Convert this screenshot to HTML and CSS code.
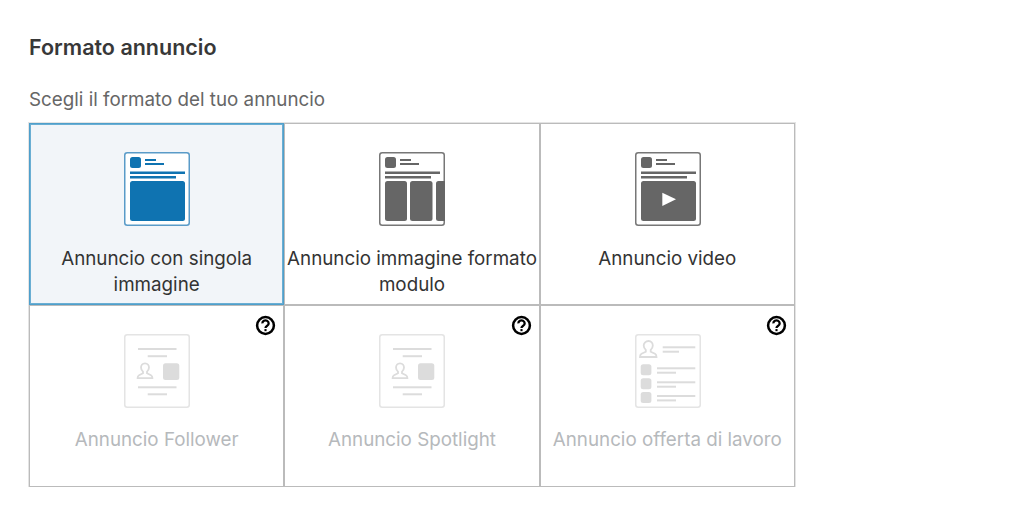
FILE: index.html
```html
<!DOCTYPE html>
<html lang="en">
<head>
    <meta charset="UTF-8">
    <meta name="viewport" content="width=device-width, initial-scale=1.0">
    <title>Formato annuncio</title>
    <link rel="stylesheet" href="styles.css">
</head>
<body>
    <div class="container">
        <h1 class="title">Formato annuncio</h1>
        <p class="subtitle">Scegli il formato del tuo annuncio</p>

        <div class="format-grid">
            <div class="format-card selected">
                <svg class="format-icon" viewBox="0 0 66 74">
                    <rect class="frame" x="0.75" y="0.75" width="64.5" height="72.5" rx="2.5"/>
                    <rect class="solid" x="6" y="5" width="11" height="11" rx="2.5"/>
                    <rect class="solid" x="21" y="7" width="11" height="2"/>
                    <rect class="solid" x="21" y="11" width="19" height="2"/>
                    <rect class="solid" x="6" y="19.5" width="55" height="2.5"/>
                    <rect class="solid" x="6" y="24" width="46" height="2.5"/>
                    <rect class="solid" x="6" y="29" width="55" height="40" rx="2.5"/>
                </svg>
                <div class="format-label">Annuncio con singola immagine</div>
            </div>

            <div class="format-card">
                <svg class="format-icon" viewBox="0 0 66 74">
                    <rect class="frame" x="0.75" y="0.75" width="64.5" height="72.5" rx="2.5"/>
                    <rect class="solid" x="6" y="5" width="11" height="11" rx="2.5"/>
                    <rect class="solid" x="21" y="7" width="11" height="2"/>
                    <rect class="solid" x="21" y="11" width="19" height="2"/>
                    <rect class="solid" x="6" y="19.5" width="55" height="2.5"/>
                    <rect class="solid" x="6" y="24" width="46" height="2.5"/>
                    <rect class="solid" x="6" y="29" width="22" height="40" rx="2.5"/>
                    <rect class="solid" x="31" y="29" width="22.5" height="40" rx="2.5"/>
                    <path class="solid" d="M66 29H59.5a2.5 2.5 0 0 0-2.5 2.5v35a2.5 2.5 0 0 0 2.5 2.5H66z"/>
                </svg>
                <div class="format-label">Annuncio immagine formato modulo</div>
            </div>

            <div class="format-card">
                <svg class="format-icon" viewBox="0 0 66 74">
                    <rect class="frame" x="0.75" y="0.75" width="64.5" height="72.5" rx="2.5"/>
                    <rect class="solid" x="6" y="5" width="11" height="11" rx="2.5"/>
                    <rect class="solid" x="21" y="7" width="11" height="2"/>
                    <rect class="solid" x="21" y="11" width="19" height="2"/>
                    <rect class="solid" x="6" y="19.5" width="55" height="2.5"/>
                    <rect class="solid" x="6" y="24" width="46" height="2.5"/>
                    <rect class="solid" x="6" y="29" width="55" height="40" rx="2.5"/>
                    <path class="play" d="M27.3 40.700L41 47.300L27.300 54z"/>
                </svg>
                <div class="format-label">Annuncio video</div>
            </div>

            <div class="format-card disabled">
                <svg class="help-icon" viewBox="0 0 20 20">
                    <circle cx="10" cy="10" r="8" fill="none" stroke="#000" stroke-width="2.4"/>
                    <path d="M7 8a3 2.8 0 1 1 4.6 2.3c-1 .7-1.6 1-1.6 2.1" fill="none" stroke="#000" stroke-width="2.2"/>
                    <rect x="9" y="13.4" width="2" height="2"/>
                </svg>
                <svg class="format-icon" viewBox="0 0 66 74">
                    <rect class="frame" x="0.75" y="0.75" width="64.5" height="72.5" rx="2.5"/>
                    <rect class="solid" x="14" y="14" width="38.5" height="2"/>
                    <rect class="solid" x="23.7" y="21.2" width="19.3" height="2"/>
                    <path class="person" d="M21 29.300c2.500 0 4 2 4 4.300 0 1.800-.8 3-2 4v1.700l4 2c1 .5 1.400 1.200 1.400 2.800H13.600c0-1.600.4-2.300 1.400-2.800l4-2v-1.700c-1.200-1-2-2.200-2-4 0-2.300 1.500-4.300 4-4.300z"/>
                    <rect class="solid" x="39" y="29.300" width="16.300" height="16.700" rx="2.500"/>
                    <rect class="solid" x="14" y="52.300" width="38.500" height="2"/>
                    <rect class="solid" x="23.700" y="59.300" width="19.300" height="2"/>
                </svg>
                <div class="format-label">Annuncio Follower</div>
            </div>

            <div class="format-card disabled">
                <svg class="help-icon" viewBox="0 0 20 20">
                    <circle cx="10" cy="10" r="8" fill="none" stroke="#000" stroke-width="2.4"/>
                    <path d="M7 8a3 2.8 0 1 1 4.6 2.3c-1 .7-1.6 1-1.6 2.1" fill="none" stroke="#000" stroke-width="2.2"/>
                    <rect x="9" y="13.4" width="2" height="2"/>
                </svg>
                <svg class="format-icon" viewBox="0 0 66 74">
                    <rect class="frame" x="0.75" y="0.75" width="64.5" height="72.5" rx="2.5"/>
                    <rect class="solid" x="14" y="14" width="38.5" height="2"/>
                    <rect class="solid" x="23.7" y="21.2" width="19.3" height="2"/>
                    <path class="person" d="M21 29.300c2.500 0 4 2 4 4.300 0 1.800-.8 3-2 4v1.700l4 2c1 .5 1.400 1.200 1.400 2.800H13.600c0-1.600.4-2.300 1.400-2.800l4-2v-1.700c-1.200-1-2-2.200-2-4 0-2.300 1.500-4.300 4-4.300z"/>
                    <rect class="solid" x="39" y="29.300" width="16.300" height="16.700" rx="2.500"/>
                    <rect class="solid" x="14" y="52.300" width="38.500" height="2"/>
                    <rect class="solid" x="23.700" y="59.300" width="19.300" height="2"/>
                </svg>
                <div class="format-label">Annuncio Spotlight</div>
            </div>

            <div class="format-card disabled">
                <svg class="help-icon" viewBox="0 0 20 20">
                    <circle cx="10" cy="10" r="8" fill="none" stroke="#000" stroke-width="2.4"/>
                    <path d="M7 8a3 2.8 0 1 1 4.6 2.3c-1 .7-1.6 1-1.6 2.1" fill="none" stroke="#000" stroke-width="2.2"/>
                    <rect x="9" y="13.4" width="2" height="2"/>
                </svg>
                <svg class="format-icon" viewBox="0 0 66 74">
                    <rect class="frame" x="0.75" y="0.75" width="64.5" height="72.5" rx="2.5"/>
                    <path class="person" d="M13.500 7c2.700 0 4.300 2.100 4.300 4.600 0 1.900-.8 3.200-2.100 4.300v1.800l4.300 2.100c1.100.6 1.500 1.300 1.500 3.200H5c0-1.900.4-2.600 1.500-3.200l4.300-2.100v-1.800c-1.300-1.100-2.100-2.400-2.100-4.300C8.700 9.100 10.800 7 13.500 7z"/>
                    <rect class="solid" x="27.700" y="12.300" width="32.600" height="2"/>
                    <rect class="solid" x="27.700" y="16.700" width="16.300" height="2"/>
                    <rect class="solid" x="5.700" y="30.300" width="10.700" height="11" rx="2.500"/>
                    <rect class="solid" x="22" y="33.300" width="38.300" height="2"/>
                    <rect class="solid" x="22" y="37.700" width="19" height="2"/>
                    <rect class="solid" x="5.700" y="44.300" width="10.700" height="11" rx="2.500"/>
                    <rect class="solid" x="22" y="47.300" width="38.300" height="2"/>
                    <rect class="solid" x="22" y="51.700" width="19" height="2"/>
                    <rect class="solid" x="5.700" y="58" width="10.700" height="11" rx="2.500"/>
                    <rect class="solid" x="22" y="61" width="38.300" height="2"/>
                    <rect class="solid" x="22" y="65.400" width="19" height="2"/>
                </svg>
                <div class="format-label">Annuncio offerta di lavoro</div>
            </div>
        </div>
    </div>
</body>
</html>
```

FILE: styles.css
```css
* {
    margin: 0;
    padding: 0;
    box-sizing: border-box;
}

body {
    font-family: Inter, "Liberation Sans", sans-serif;
    background: white;
    color: #2f2f2f;
}

.container {
    width: 795px;
    padding: 35px 0 0 29px;
}

.title {
    font-size: 21.5px;
    font-weight: 600;
    line-height: 24px;
    color: #383838;
}

.subtitle {
    margin-top: 29px;
    font-size: 18.8px;
    line-height: 24px;
    color: #666;
}

.format-grid {
    display: grid;
    grid-template-columns: repeat(3, 1fr);
    grid-auto-rows: 182px;
    margin-top: 11px;
    box-shadow: 0 0 0 1px #e4e4e4;
}

.format-card {
    position: relative;
    display: flex;
    flex-direction: column;
    align-items: center;
    padding-top: 28px;
    border: 1px solid #bbb;
    text-align: center;
}

.format-card.selected {
    background: #f2f5f9;
    border: 1px solid #4f9fcb;
    box-shadow: inset 0 0 0 1px #6aaed3;
}

.format-icon {
    display: block;
    width: 66px;
    height: 74px;
    margin-left: 1px;
    flex: none;
}

.format-label {
    margin-top: 20px;
    font-size: 18.8px;
    line-height: 26px;
    color: #333;
}

.frame {
    fill: white;
    stroke: #777;
    stroke-width: 1.5;
}

.solid {
    fill: #666;
}

.play {
    fill: white;
}

.selected .frame {
    stroke: #5a9bc8;
}

.selected .solid {
    fill: #0f73b1;
}

.disabled .frame {
    stroke: #e4e4e4;
}

.disabled .solid {
    fill: #dcdcdc;
}

.person {
    fill: none;
    stroke: #dcdcdc;
    stroke-width: 1.8;
}

.disabled .format-label {
    margin-top: 19px;
    color: #b6b9bc;
}

.help-icon {
    position: absolute;
    top: 9px;
    right: 7px;
    width: 21px;
    height: 21px;
}
```
